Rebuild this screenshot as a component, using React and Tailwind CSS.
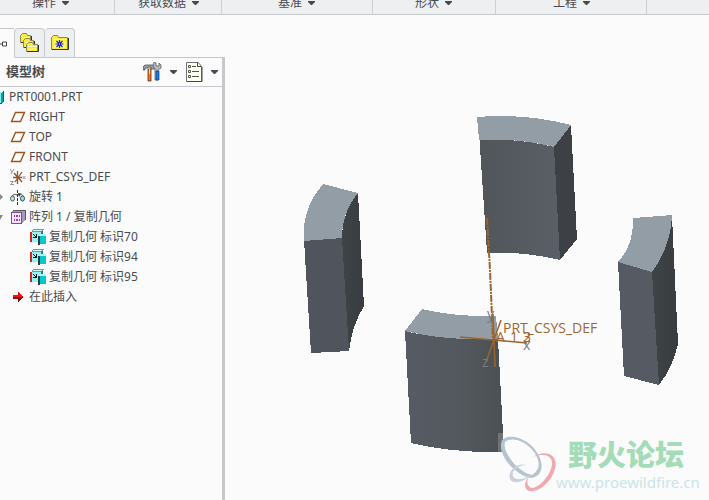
import React from "react";

const ribbonGroups = [
  { label: "操作", width: "basis-[115px] pl-8" },
  { label: "获取数据", width: "basis-[107px] pl-[23px]" },
  { label: "基准", width: "basis-[151px] pl-14" },
  { label: "形状", width: "basis-[123px] pl-[42px]" },
  { label: "工程", width: "basis-[151px] pl-[57px]" },
];

const Caret = () => (
  <svg width="7" height="4" viewBox="0 0 7 4" fill="#4a4a4e">
    <path d="M0 0h7v1L4 4H3L0 1z" />
  </svg>
);

const PartIcon = () => (
  <svg className="shrink-0" width="6" height="16" viewBox="0 0 6 16" shapeRendering="crispEdges">
    <path d="M0 3h1v11H0z" fill="#7ff4f4" />
    <path d="M1 4l3-2v11l-3 2z" fill="#169a9d" />
    <path d="M0 14h2v1H0zM3 2h1v11H3z" fill="#245c60" />
  </svg>
);

const PlaneIcon = () => (
  <svg className="shrink-0" width="16" height="16" viewBox="0 0 16 16">
    <path d="M5.500 3.500h9l-4 9h-9z" fill="none" stroke="#9a5523" strokeWidth="1.400" />
  </svg>
);

const CsysIcon = () => (
  <svg className="shrink-0" width="16" height="16" viewBox="0 0 16 16" fill="none">
    <path d="M7.500 2v13M3 8.500h9M4 4l8 9M12 3l-7 10" stroke="#945328" strokeWidth="1.300" />
    <path d="M0 0l2 3M4 0L1 5M12.500 7l3 3M15.500 7l-3 3M0 12.500h3.500l-3 3h3.500" stroke="#888" strokeWidth=".9" />
  </svg>
);

const RevolveIcon = () => (
  <svg className="shrink-0" width="16" height="16" viewBox="0 0 16 16">
    <path d="M7.500 1v15" stroke="#333" strokeDasharray="3 1" />
    <path d="M2 7C4 5 5 5 7 6M8 5.500C10 4 12 5 13 7" fill="none" stroke="#444" />
    <path d="M8 4l3 1-2 3" fill="#333" />
    <ellipse cx="2.500" cy="9.500" rx="2" ry="2.600" fill="#b7e5e8" stroke="#555" />
    <ellipse cx="12.500" cy="9.500" rx="2" ry="2.600" fill="#7deaf0" stroke="#444" />
  </svg>
);

const PatternIcon = () => (
  <svg className="shrink-0" width="16" height="16" viewBox="0 0 16 16" shapeRendering="crispEdges">
    <path d="M1 4l2-3h12v10l-3 4z" fill="#a99ab5" />
    <path d="M3 1h12v10" fill="none" stroke="#5f5468" />
    <path d="M1 3h11v12H1z" fill="#6c5a7c" />
    <path d="M2 4h9v10H2z" fill="#f6e4ff" />
    <path d="M4 6h1v2H4zM6 6h2v2H6zM9 6h1v2H9zM4 10h1v2H4zM6 10h2v2H6zM9 10h1v2H9z" fill="#a030e8" />
  </svg>
);

const CopyGeomIcon = () => (
  <svg className="shrink-0" width="16" height="16" viewBox="0 0 16 16" shapeRendering="crispEdges">
    <path d="M1 2l2-2h11l-2 3H2z" fill="#77989b" />
    <path d="M3 1h9l-1 1H3z" fill="#d4f7f7" />
    <path d="M2 3h9v10H2z" fill="#98f4f4" />
    <path d="M11 2h2v4h-2z" fill="#218387" />
    <path d="M0 3h2v10H0z" fill="#d82218" />
    <path d="M3 5h1v1h1v1h1V5h1v4H3V8h2V7H4V6H3z" fill="#111" />
    <path d="M8 7l2-2h6v2z" fill="#b2f5f5" />
    <path d="M8 7h2v9H8z" fill="#2c3f41" />
    <path d="M10 7h6v8h-6z" fill="#06c7c9" />
  </svg>
);

const InsertIcon = () => (
  <svg className="shrink-0" width="16" height="16" viewBox="0 0 16 16" shapeRendering="crispEdges">
    <path d="M3 6h5V3l5 5H3z" fill="#f01010" />
    <path d="M3 8h10l-5 5v-3H3z" fill="#8c0a0a" />
  </svg>
);

const FolderShape = ({ x, y, w, h }) => (
  <g transform={`translate(${x} ${y})`}>
    <path d={`M.5 ${h - 0.5}V2.500l2-2h4l1 2h${w - 8}v${h - 3}z`} fill="#f7ec3c" stroke="#8d8758" />
    <path d={`M2 4.500h${w - 3}`} stroke="#fffdc9" />
    <path d={`M3 6h${w - 5}v${h - 8}h-${w - 5}z`} fill="#fff7a0" opacity=".6" />
    <path d={`M1 ${h - 0.5}h${w - 0.5}V3`} fill="none" stroke="#333" />
  </g>
);

const FoldersIcon = () => (
  <svg width="19" height="20" viewBox="0 0 19 20">
    <FolderShape x={0} y={0} w={11} h={10} />
    <FolderShape x={3} y={5} w={11} h={10} />
    <FolderShape x={6} y={9} w={12} h={10} />
  </svg>
);

const FavoritesIcon = () => (
  <svg width="18" height="16" viewBox="0 0 18 16">
    <FolderShape x={0} y={0} w={17} h={15} />
    <path d="M8.500 5v8M4.500 9h8M5.500 6l6 6M11.500 6l-6 6" stroke="#1721cc" strokeWidth="1.200" />
    <path d="M8 8.500h1v1H8z" fill="#fff" />
  </svg>
);

const ToolsIcon = () => (
  <svg width="19" height="20" viewBox="0 0 19 20">
    <path d="M0 8V5l2-2h8l2 2v2H8V5H5v1H2v2z" fill="#99a5a8" stroke="#4d5254" strokeWidth=".8" />
    <path d="M5 7h3v12H5z" fill="#e57b22" stroke="#702a18" strokeWidth=".8" />
    <path d="M6 7h1v5H6z" fill="#ffe4a8" />
    <path d="M11 0l2 1v3h3V1l2 2v3l-3 2v10h-3V7l-2-3z" fill="#b2bcc0" stroke="#5a6064" strokeWidth=".8" />
    <path d="M13 9h3v9h-3z" fill="#147cdf" stroke="#123d87" strokeWidth=".7" />
  </svg>
);

const SettingsIcon = () => (
  <svg width="17" height="20" viewBox="0 0 17 20" fill="none">
    <path d="M.5.5h12l3 4v15H.5z" fill="#fffff2" stroke="#707070" />
    <path d="M11.500.5v4h4M1 19.500h15V5" stroke="#444" />
    <path d="M6 4.500h4M6 9.500h7M6 14.500h7" stroke="#555" />
    <path d="M2.500 3.500h2v2h-2zM2.500 8.500h2v2h-2zM2.500 13.500h2v2h-2z" stroke="#555" />
  </svg>
);

const treeItems = [
  { label: "RIGHT", icon: PlaneIcon },
  { label: "TOP", icon: PlaneIcon },
  { label: "FRONT", icon: PlaneIcon },
  { label: "PRT_CSYS_DEF", icon: CsysIcon },
  { label: "旋转 1", icon: RevolveIcon, toggle: "M0 1l3 3-3 3z" },
  { label: "阵列 1 / 复制几何", icon: PatternIcon, toggle: "M0 2h3L0 7z" },
  { label: "复制几何 标识70", icon: CopyGeomIcon, nested: true },
  { label: "复制几何 标识94", icon: CopyGeomIcon, nested: true },
  { label: "复制几何 标识95", icon: CopyGeomIcon, nested: true },
  { label: "在此插入", icon: InsertIcon },
];

const Ribbon = () => (
  <nav className="flex h-[15px] border-b border-[#c5c8cc] bg-[#eeeff1]">
    {ribbonGroups.map((group) => (
      <div key={group.label} className={`flex items-end overflow-hidden border-r border-[#cbced2] ${group.width}`}>
        <button type="button" className="flex items-center gap-[6px] whitespace-nowrap pb-[3px] text-xs leading-4">
          {group.label}
          <Caret />
        </button>
      </div>
    ))}
  </nav>
);

const ModelTree = () => (
  <aside className="flex w-[225px] shrink-0 flex-col pt-[13px]">
    <div className="flex h-[30px]">
      <button type="button" aria-label="Model tree" className="flex w-[14px] items-center border-t border-[#c5c8cc]">
        <svg width="8" height="6" viewBox="0 0 8 6" fill="none" stroke="#444">
          <path d="M0 3h2M2.500 1h4v4h-4z" />
        </svg>
      </button>
      <button type="button" aria-label="Folder browser" className="flex w-[31px] items-center justify-center rounded-t-sm border border-[#c5c8cc] bg-[#eeeff1]">
        <FoldersIcon />
      </button>
      <button type="button" aria-label="Favorites" className="flex w-[30px] items-center justify-center rounded-t-sm border border-l-0 border-[#c5c8cc] bg-[#eeeff1]">
        <FavoritesIcon />
      </button>
      <div className="flex-1 border-b border-[#c5c8cc]" />
    </div>
    <div className="flex-1 border-r-3 border-[#c5c8cc]">
      <div className="flex h-[29px] items-center border-b border-[#c5c8cc] pl-[6px] pr-1">
        <h2 className="flex-1 text-[13px] font-bold">模型树</h2>
        <button type="button" aria-label="Tree tools" className="flex items-center gap-2">
          <ToolsIcon />
          <Caret />
        </button>
        <button type="button" aria-label="Tree settings" className="ml-[9px] flex items-center gap-2">
          <SettingsIcon />
          <Caret />
        </button>
      </div>
      <ul className="text-xs leading-5">
        <li className="flex h-5 items-center gap-[3px]">
          <PartIcon />
          PRT0001.PRT
        </li>
        {treeItems.map((item) => (
          <li key={item.label} className={`flex h-5 items-center ${item.nested ? "pl-5" : ""}`}>
            <span className="flex w-[10px] shrink-0">
              {item.toggle && (
                <button type="button" aria-label={item.label}>
                  <svg width="4" height="8" viewBox="0 0 4 8" fill="#888">
                    <path d={item.toggle} />
                  </svg>
                </button>
              )}
            </span>
            <item.icon />
            <span className="pl-[3px]">{item.label}</span>
          </li>
        ))}
      </ul>
    </div>
  </aside>
);

const Model = () => (
  <svg className="block w-full" viewBox="225 15 484 485">
    <defs>
      <linearGradient id="outer">
        <stop offset="0" stopColor="#50565a" />
        <stop offset="1" stopColor="#5a5e66" />
      </linearGradient>
      <linearGradient id="inner">
        <stop offset="0" stopColor="#565b64" />
        <stop offset=".5" stopColor="#54595f" />
        <stop offset="1" stopColor="#4a5053" />
      </linearGradient>
      <linearGradient id="side">
        <stop offset="0" stopColor="#3e4446" />
        <stop offset="1" stopColor="#393c40" />
      </linearGradient>
    </defs>
    <g shapeRendering="crispEdges">
      <path d="M358 193L364 306Q352 325 349 351L342 239Q342 212 358 193z" fill="url(#side)" />
      <path d="M304 240L342 238 349 351 311 353z" fill="#50545c" />
      <path d="M323 184L358 193Q342 212 342 238L304 241Q301 210 323 184z" fill="#929da5" />

      <path d="M571 125L577 239 560 260 553 147z" fill="#3d4045" />
      <path d="M478 117L479 140Q518 138 554 147L560 260Q522 251 487 253z" fill="url(#outer)" />
      <path d="M477 117Q525 113 571 125L554 147Q520 138 479 140z" fill="#929da5" />

      <path d="M672 216L678 344Q673 367 659 385L652 272Q665 248 672 216z" fill="url(#side)" />
      <path d="M618 262L652 272 659 385 624 376z" fill="#565a62" />
      <path d="M633 218L672 215Q671 246 652 272L618 262Q634 245 633 218z" fill="#929da5" />

      <path d="M405 331Q440 340 498 339L504 452Q452 453 411 443z" fill="url(#inner)" />
      <path d="M422 309Q455 317 496 316L498 339Q445 341 405 331z" fill="#929da5" />
    </g>
    <g fill="none" stroke="#9b642f">
      <path d="M487 218L490 270 493 340" strokeWidth="2" strokeDasharray="7 1 2 1" />
      <path d="M460 337L527 343M486 362L501 320M493 314L495 367" strokeWidth="1.500" />
    </g>
    <g className="font-['Open_Sans',sans-serif]" fill="#a0672f" fontSize="14">
      <text x="503" y="333">PRT_CSYS_DEF</text>
      <text x="496" y="342">A</text>
      <text x="510" y="342">1</text>
      <text x="523" y="342">2</text>
      <text x="523" y="342">3</text>
    </g>
    <g className="font-['Open_Sans',sans-serif]" fill="#777b7f" fontSize="14">
      <text x="487" y="319">y</text>
      <text x="482" y="367">z</text>
      <text x="523" y="350">x</text>
    </g>
  </svg>
);

const Watermark = () => (
  <div className="absolute bottom-0 right-0 flex h-[67px] w-[211px] bg-white/20">
    <svg className="shrink-0" width="58" height="62" viewBox="0 0 58 62">
      <path fillRule="evenodd" d="M4 7C12 -1 33 6 41 23C47 36 42 44 33 45C18 43 -2 22 4 7zM7 9C4 19 20 39 34 42C42 37 43 29 36 19C28 8 14 3 7 9z" fill="#b5c4d2" />
      <path fillRule="evenodd" d="M35 24C47 16 61 21 57 36C53 51 37 62 29 57C25 53 28 46 31 44C28 48 29 54 34 55C42 54 52 43 54 32C55 22 46 20 35 24z" fill="#eeaaae" />
      <path d="M29 32C18 29 9 39 12 46C15 52 27 49 32 42C25 47 17 48 15 43C13 38 20 32 29 32z" fill="#cbd1da" />
    </svg>
    <div className="flex-1 whitespace-nowrap">
      <div className="pl-3 pt-1 text-[29px] font-black leading-9 text-[#a5dcb8]">野火论坛</div>
      <div className="text-[15px] leading-[18px] text-[#c9e5e8]">www.proewildfire.cn</div>
    </div>
  </div>
);

const App = () => {
  return (
    <div className="flex min-h-screen flex-col bg-[#fbfbfb] font-['Noto_Sans','Noto_Sans_CJK_SC',sans-serif] text-[#4a4b50]">
      <Ribbon />
      <div className="flex flex-1">
        <ModelTree />
        <main className="relative min-w-0 flex-1">
          <Model />
          <Watermark />
        </main>
      </div>
    </div>
  );
};

export default App;
